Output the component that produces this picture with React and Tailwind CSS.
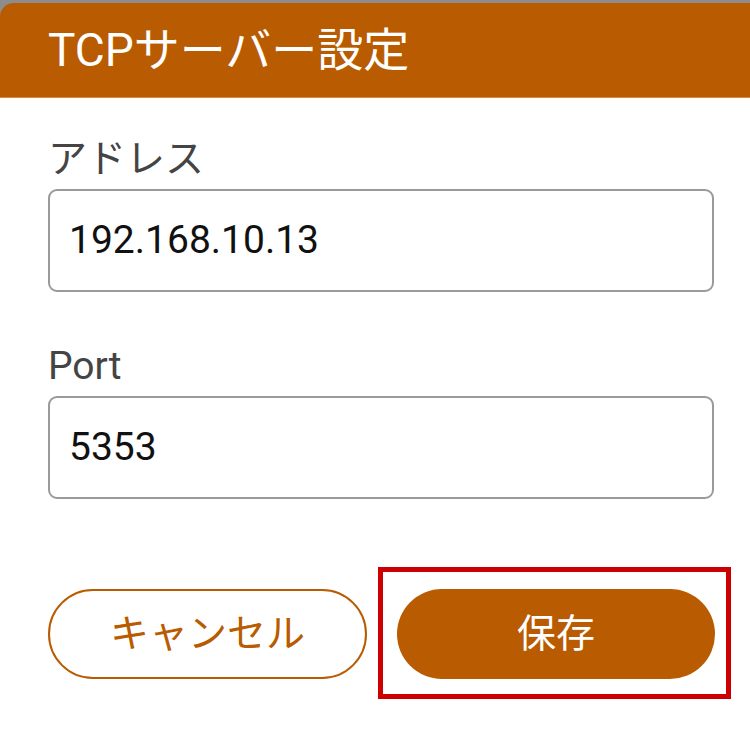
import React from "react";

const font = { fontFamily: '"Roboto", "Noto Sans CJK JP", sans-serif' };

const Field = ({ label, value, className = "" }) => (
  <div className={className}>
    <div className="text-[39px] leading-[44px] text-[#444444]">{label}</div>
    <div className="mt-[8px] h-[103px] w-[666px] rounded-[9px] border-2 border-[#9a9a9a] flex items-center px-[19px]">
      <span className="text-[39px] text-[#111111]">{value}</span>
    </div>
  </div>
);

export default function App() {
  return (
    <div
      className="w-[750px] h-[730px] bg-[#8d8d8d] pt-[3px] flex flex-col overflow-hidden"
      style={font}
    >
      {/* Title bar */}
      <div className="h-[95px] bg-[#b95b00] rounded-tl-[14px] flex items-center pl-[48px] border-b border-[#d88a4a]">
        <h1 className="text-[46px] font-normal text-white">TCPサーバー設定</h1>
      </div>

      {/* Body */}
      <div className="flex-1 bg-white pl-[48px] relative">
        <Field label="アドレス" value="192.168.10.13" className="mt-[39px]" />
        <Field label="Port" value="5353" className="mt-[52px]" />

        {/* Buttons */}
        <div className="mt-[90px] flex gap-[30px]">
          <button className="w-[319px] h-[90px] rounded-full border-2 border-[#b95b00] bg-white text-[#b95b00] text-[39px]">
            キャンセル
          </button>
          <button className="w-[318px] h-[90px] rounded-full bg-[#b95b00] text-white text-[39px]">
            保存
          </button>
        </div>

        {/* Highlight annotation */}
        <div className="absolute left-[378px] top-[469px] w-[353px] h-[132px] border-[5px] border-[#cc0000]" />
      </div>
    </div>
  );
}
